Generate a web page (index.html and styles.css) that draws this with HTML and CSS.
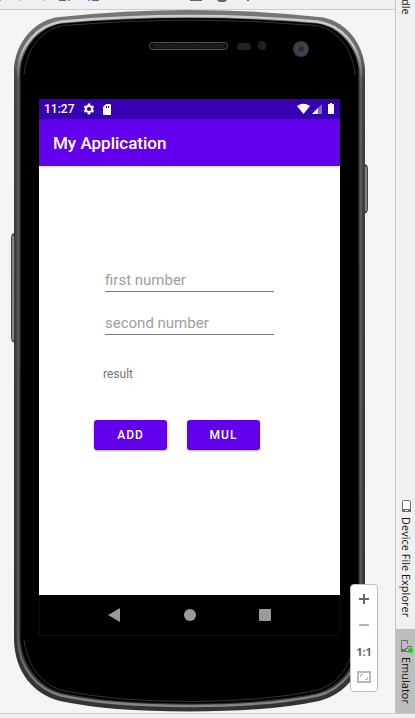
FILE: index.html
```html
<!DOCTYPE html>
<html lang="en">
<head>
<meta charset="utf-8">
<title>Emulator</title>
<meta name="viewport" content="width=device-width, initial-scale=1">
<link rel="stylesheet" href="styles.css">
</head>
<body>
<div class="workspace">
  <div class="toolbar">
    <svg width="270" height="3" viewBox="0 0 270 3" aria-hidden="true">
      <path d="M0 0h1v1H0zM20 0h1v1h-1zM43 0h1v1h-1z" fill="#999"/>
      <path d="M59 0h7v1h-7zM92 0h7v1h-7zM190 0h12v1h-12zM217 0h10l-2 2h-6zM247 0h2v1h-2z" fill="#666"/>
      <path d="M68 0h2v1h-2zM88 0h2v1h-2z" fill="#3ea7d8"/>
    </svg>
  </div>
  <main class="stage">
    <div class="device">
      <svg class="shell" viewBox="11 10 358 702" preserveAspectRatio="none" aria-hidden="true">
        <defs>
          <linearGradient id="rim" gradientUnits="userSpaceOnUse" x1="0" y1="10" x2="0" y2="712">
            <stop offset="0" stop-color="#777"/><stop offset=".06" stop-color="#6a6a6a"/><stop offset=".1" stop-color="#404040"/><stop offset="1" stop-color="#333"/>
          </linearGradient>
          <linearGradient id="shine" gradientUnits="userSpaceOnUse" x1="0" y1="10" x2="0" y2="712">
            <stop offset="0" stop-color="#d0d0d0"/><stop offset=".05" stop-color="#c4c4c4"/><stop offset=".1" stop-color="#5a5a5a"/><stop offset=".88" stop-color="#555"/><stop offset="1" stop-color="#8a8a8a"/>
          </linearGradient>
        </defs>
        <path d="M15 233q-4 0-4 5v100q0 4 4 5z" fill="#444"/>
        <path d="M12 236h2v104h-2z" fill="#888"/>
        <path d="M364 164q4 0 4 5v40q0 4-4 5z" fill="#444"/>
        <path d="M365 167h2v44h-2z" fill="#858585"/>
        <path d="M14 68C16 42 35 19 60 17Q125 10 189.500 10T319 17C344 19 363 42 365 68V640C364 672 346 694 319 701Q270 711.500 189.500 711.500T60 701C33 694 15 672 14 640Z" fill="url(#rim)"/>
        <path d="M18 69C20 46 37 25 62 21.500Q125 16 189.500 16T317 21.500C342 25 359 46 361 69V639C360 668 342 689 318 695.500Q268 706 189.500 706T61 695.500C37 689 19 668 18 639Z" fill="none" stroke="url(#shine)" stroke-width="2.400"/>
        <path d="M20.500 70C22 49 38 27 62 23.500Q125 18 189.500 18T317 23.500C341 27 357 49 358.500 70V638C357 665 341 686 317 693Q266 703.500 189.500 703.500T62 693C38 686 22 665 20.500 638Z"/>
        <path d="M24 75C26 49 42 29 63 25.500Q126 20 189.500 20T316 25.500C337 29 353 49 355 75M24 640C28 667 42 685 63 690.500Q115 701.500 189.500 701.500T316 690.500C337 685 351 667 355 640" fill="none" stroke="#353535"/>
        <rect x="149.500" y="42.500" width="78" height="7" rx="3" fill="#111" stroke="#505050"/>
        <path d="M153 45h72M155 47h69" stroke="#353535" stroke-width="1" stroke-dasharray="2 1"/>
        <rect x="237" y="43" width="14" height="7" rx="3" fill="#222"/>
        <circle cx="262" cy="45.500" r="4.500" fill="#202020"/>
        <circle cx="301" cy="49" r="8" fill="#34383f"/><circle cx="301" cy="49" r="7" fill="#3e424a"/><circle cx="301" cy="49" r="3" fill="#292d36"/>
      </svg>
      <section class="screen">
        <div class="status">
          <span class="clock">11:27</span>
          <svg width="12" height="12" viewBox="3 2 20 20" fill="#fff" aria-hidden="true"><path d="M19.400 13a7.500 7.500 0 0 0 0-2l2.100-1.600-2-3.500-2.500 1a7 7 0 0 0-1.700-1L15 3h-4l-.5 2.900a7 7 0 0 0-1.700 1l-2.500-1-2 3.500L6.400 11a7.500 7.500 0 0 0 0 2l-2.100 1.600 2 3.500 2.500-1a7 7 0 0 0 1.700 1L11 21h4l.4-2.900a7 7 0 0 0 1.700-1l2.500 1 2-3.500zM13 15.500a3.500 3.500 0 1 1 0-7 3.500 3.500 0 0 1 0 7z"/></svg>
          <svg class="card" width="8" height="11" viewBox="0 0 8 11" aria-hidden="true"><path d="M3 0h4q1 0 1 1v9q0 1-1 1H1q-1 0-1-1V3z" fill="#fff"/><path d="M3 2h1v2H3zM5 2h1v2H5z" fill="#3700b3"/></svg>
          <svg class="signals" width="38" height="12" viewBox="0 0 38 12" aria-hidden="true"><path d="M0 3Q6.500-1.500 13 3L6.500 11z" fill="#fff"/><path d="M25 1v10H15z" fill="#8a66d1"/><path d="M21 5v6h-6z" fill="#fff"/><path d="M33 0h2v1h2v10h-6V1h2z" fill="#fff"/></svg>
        </div>
        <header class="appbar"><h1>My Application</h1></header>
        <form class="content">
          <input class="field" type="text" placeholder="first number" aria-label="first number">
          <input class="field" type="text" placeholder="second number" aria-label="second number">
          <output class="result">result</output>
          <div class="actions">
            <button type="button">ADD</button>
            <button type="button">MUL</button>
          </div>
        </form>
        <nav class="navbar">
          <button type="button" aria-label="Back"><svg width="14" height="14" viewBox="0 0 14 14"><path d="M1 7 13 0v14z"/></svg></button>
          <button type="button" aria-label="Home"><svg width="14" height="14" viewBox="0 0 14 14"><circle cx="7" cy="7" r="6"/></svg></button>
          <button type="button" aria-label="Overview"><svg width="14" height="14" viewBox="0 0 14 14"><rect x="1" y="1" width="12" height="12" rx="1"/></svg></button>
        </nav>
      </section>
    </div>
    <div class="zoom">
      <button type="button" aria-label="Zoom in"><svg width="14" height="14" viewBox="0 0 14 14"><path d="M7 2v10M2 7h10" stroke="#666" stroke-width="2"/></svg></button>
      <button type="button" aria-label="Zoom out"><svg width="14" height="14" viewBox="0 0 14 14"><path d="M2 7h10" stroke="#b5b5b5" stroke-width="2"/></svg></button>
      <button type="button">1:1</button>
      <button type="button" aria-label="Fit to window"><svg width="14" height="12" viewBox="0 0 14 12"><path d="M1 1h12v10H1z" fill="none" stroke="#b8b8b8" stroke-width="2"/><path d="M3.500 6V3.500H6M8 8.500h2.500V6" fill="none" stroke="#b8b8b8"/></svg></button>
    </div>
  </main>
</div>
<aside class="tabs">
  <button class="tab first" type="button">dle</button>
  <button class="tab explorer" type="button">
    <svg width="12" height="14" viewBox="0 0 12 14" aria-hidden="true"><rect x="2.500" y="1.500" width="8" height="11" rx="1" fill="#fff" stroke="#6e6e6e"/><path d="M2 10h9v3H2z" fill="#6e6e6e"/><path d="M5 11h3v1H5z" fill="#fff"/></svg>
    Device File Explorer
  </button>
  <button class="tab active" type="button">
    <svg width="14" height="14" viewBox="0 0 14 14" aria-hidden="true"><path d="M8.500 5V1.500h-6V11H6" fill="none" stroke="#6e6e6e"/><path d="M2 10h4v3H2z" fill="#6e6e6e"/><path d="M6.500 12.500v-3h2v-2h4v4h-2v1z" fill="none" stroke="#6e6e6e"/><circle cx="11.500" cy="11.500" r="2.500" fill="#12d812"/></svg>
    Emulator
  </button>
</aside>
<footer class="bottom"></footer>
</body>
</html>
```

FILE: styles.css
```css
* { box-sizing: border-box; }

body {
  margin: 0;
  min-height: 100vh;
  display: grid;
  grid-template-columns: 1fr 20px;
  grid-template-rows: 1fr 5px;
  overflow: hidden;
  background: #f0f0f0;
  font-family: Roboto, "Liberation Sans", sans-serif;
}

button {
  margin: 0;
  padding: 0;
  border: 0;
  background: none;
  font: inherit;
}

svg { display: block; flex: none; }

.workspace {
  display: flex;
  flex-direction: column;
}

.toolbar {
  height: 10px;
  border-bottom: 1px solid #cdcdcd;
}

.stage {
  position: relative;
  flex: 1;
  padding: 0 26px 0 11px;
  background: #f4f4f4;
}

.device {
  position: relative;
  height: 100%;
  padding: 89px 29px 77px 28px;
  display: flex;
}

.shell {
  position: absolute;
  inset: 0;
  width: 100%;
  height: 702px;
}

.screen {
  position: relative;
  flex: 1;
  display: flex;
  flex-direction: column;
  background: #fff;
}

.status {
  height: 20px;
  padding: 0 5px;
  display: flex;
  align-items: center;
  gap: 8px;
  background: #3700b3;
  color: #fff;
}

.clock {
  width: 31px;
  font-size: 12px;
  font-weight: 500;
  line-height: 20px;
}

.signals { margin-left: auto; }

.appbar {
  height: 47px;
  padding: 0 14px;
  display: flex;
  align-items: center;
  background: #6200ee;
  box-shadow: 0 1px 2px #0003;
}

.appbar h1 {
  margin: 0;
  color: #fff;
  font-size: 17px;
  font-weight: 500;
  line-height: 24px;
}

.content {
  flex: 1;
  padding: 101px 66px 0;
  display: flex;
  flex-direction: column;
}

.field {
  width: 100%;
  height: 25px;
  margin-bottom: 18px;
  padding: 2px 0 0;
  border: 0;
  border-bottom: 1px solid #7b7b7b;
  border-radius: 0;
  background: transparent;
  color: #222;
  font: 15px/22px Roboto, "Liberation Sans", sans-serif;
}

.field::placeholder {
  color: #9e9e9e;
  opacity: 1;
}

.result {
  margin: 12px -2px 0;
  color: #757575;
  font-size: 12px;
  line-height: 18px;
}

.actions {
  margin: 37px -11px 0;
  display: flex;
  gap: 20px;
}

.actions button {
  width: 73px;
  height: 30px;
  border-radius: 3px;
  background: #6200ee;
  box-shadow: 0 1px 2px #0005;
  color: #fff;
  font-size: 12px;
  font-weight: 500;
  letter-spacing: 1px;
}

.navbar {
  height: 41px;
  padding: 0 67px;
  display: flex;
  align-items: center;
  justify-content: space-between;
  background: #000;
  border: 1px solid #0b1010;
  border-top: 0;
}

.navbar svg { fill: #9b9b9b; }

.zoom {
  position: absolute;
  right: 17px;
  bottom: 21px;
  width: 28px;
  height: 108px;
  padding: 1px 0;
  display: grid;
  grid-template-rows: repeat(4, 26px);
  border: 1px solid #bdbdbd;
  border-radius: 4px;
  background: #fff;
}

.zoom button {
  display: grid;
  place-items: center;
  color: #666;
  font: bold 11px "Open Sans", sans-serif;
}

.tabs {
  display: flex;
  flex-direction: column;
  overflow: hidden;
  border-left: 1px solid #c8c8c8;
}

.tab {
  display: flex;
  align-items: center;
  gap: 4px;
  writing-mode: vertical-rl;
  width: 19px;
  color: #111;
  font: 11px/18px "Open Sans", sans-serif;
  white-space: nowrap;
}

.first {
  height: 15px;
  justify-content: flex-end;
}

.explorer {
  margin-top: auto;
  height: 130px;
}

.active {
  height: 84px;
  padding-top: 10px;
  background: #bdbdbd;
}

.bottom {
  grid-column: 1 / -1;
  border-top: 1px solid #cdcdcd;
}
```
